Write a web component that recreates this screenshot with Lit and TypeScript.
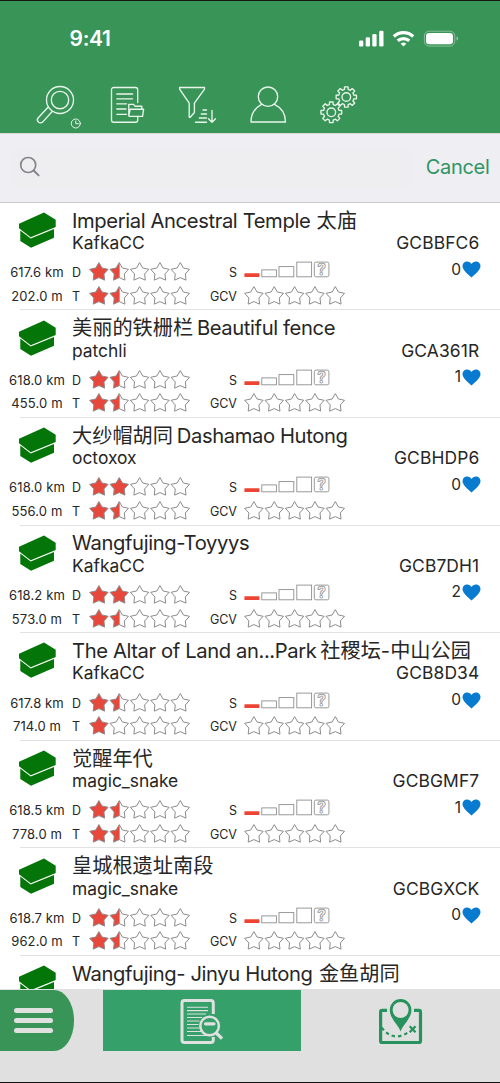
import { LitElement, html, svg, css } from "lit";
import { customElement, property } from "lit/decorators.js";

const starPoints = (cx: number, cy: number, r: number, inner: number) =>
  Array.from({ length: 10 }, (_, i) => {
    const a = (Math.PI / 5) * i - Math.PI / 2;
    const q = i % 2 ? inner : r;
    return `${(cx + q * Math.cos(a)).toFixed(2)},${(cy + q * Math.sin(a)).toFixed(2)}`;
  }).join(" ");

const gearPath = (cx: number, cy: number, r: number, root: number) => {
  const pts: string[] = [];
  for (let i = 0; i < 8; i++) {
    const a = (Math.PI / 4) * i;
    for (const [d, q] of [[-0.24, root], [-0.17, r], [0.17, r], [0.24, root]]) {
      pts.push(`${(cx + q * Math.cos(a + d)).toFixed(2)} ${(cy + q * Math.sin(a + d)).toFixed(2)}`);
    }
  }
  return "M" + pts.join("L") + "Z";
};

interface Cache {
  title: string[];
  author: string;
  code: string;
  km: string;
  m: string;
  d: number;
  t: number;
  fav: number;
}

const caches: Cache[] = [
  { title: ["Imperial Ancestral Temple ", "太庙"], author: "KafkaCC", code: "GCBBFC6", km: "617.6 km", m: "202.0 m", d: 1.5, t: 1.5, fav: 0 },
  { title: ["美丽的铁栅栏", "Beautiful fence"], author: "patchli", code: "GCA361R", km: "618.0 km", m: "455.0 m", d: 1.5, t: 1.5, fav: 1 },
  { title: ["大纱帽胡同", "Dashamao Hutong"], author: "octoxox", code: "GCBHDP6", km: "618.0 km", m: "556.0 m", d: 2, t: 1.5, fav: 0 },
  { title: ["Wangfujing-Toyyys"], author: "KafkaCC", code: "GCB7DH1", km: "618.2 km", m: "573.0 m", d: 2, t: 1.5, fav: 2 },
  { title: ["The Altar of Land an...Park", "社稷坛-中山公园"], author: "KafkaCC", code: "GCB8D34", km: "617.8 km", m: "714.0 m", d: 1.5, t: 1, fav: 0 },
  { title: ["觉醒年代"], author: "magic_snake", code: "GCBGMF7", km: "618.5 km", m: "778.0 m", d: 1.5, t: 1.5, fav: 1 },
  { title: ["皇城根遗址南段"], author: "magic_snake", code: "GCBGXCK", km: "618.7 km", m: "962.0 m", d: 1.5, t: 1.5, fav: 0 },
  { title: ["Wangfujing- Jinyu Hutong ", "金鱼胡同"], author: "", code: "", km: "", m: "", d: 0, t: 0, fav: 0 },
];

@customElement("star-rating")
class StarRating extends LitElement {
  @property({ type: Number }) value = 0;
  static styles = css`
    :host { display: block; height: 20px; }
    svg { display: block; }
  `;
  render() {
    return html`<svg width="103" height="20" viewBox="0 0 103 20">
      ${[0, 1, 2, 3, 4].map((i) => {
        const cx = 9.9 + i * 20.35;
        const pts = starPoints(cx, 10.3, 9.7, 5.3);
        const left = this.value - i;
        return svg`
          ${left >= 1 ? svg`<polygon points=${pts} fill="#e8483c"/>` : ""}
          ${left === 0.5 ? svg`<clipPath id=${"h" + i}><rect x=${cx - 10} y="0" width="10.4" height="20"/></clipPath>
            <polygon points=${pts} fill="#e8483c" clip-path=${`url(#h${i})`}/>` : ""}
          <polygon points=${pts} fill="none" stroke="#8c8c8c" stroke-width="1" stroke-linejoin="round"/>`;
      })}
    </svg>`;
  }
}

@customElement("size-meter")
class SizeMeter extends LitElement {
  static styles = css`
    :host { display: block; height: 17px; }
    svg { display: block; overflow: visible; }
    text { font: 700 15.5px Inter, sans-serif; }
  `;
  render() {
    return html`<svg width="86" height="17" viewBox="0 0 86 17">
      <rect x="0.4" y="12.2" width="15" height="3.8" rx="0.6" fill="#ee4433"/>
      <g fill="none" stroke="#8e8e8e" stroke-width="0.9">
        <rect x="17.8" y="8.9" width="14.6" height="6.9"/>
        <rect x="35" y="5.6" width="14.8" height="10.2"/>
        <rect x="52.8" y="1.1" width="14.8" height="14.7"/>
        <rect x="70.3" y="1.1" width="14.6" height="14.7" rx="1.6"/>
        <text x="77.6" y="14" text-anchor="middle" stroke-width="0.75">?</text>
      </g>
    </svg>`;
  }
}

@customElement("cache-row")
class CacheRow extends LitElement {
  @property({ attribute: false }) cache!: Cache;
  static styles = css`
    :host { display: block; height: 107.6px; flex: none; }
    .row { display: grid; grid-template-columns: 72px 1fr; }
    .boxicon { padding: 9px 0 0 18px; height: 42px; }
    .boxicon svg { display: block; }
    .head { padding-top: 4.7px; }
    .title { display: flex; font-size: 20.2px; line-height: 26px; white-space: pre; letter-spacing: -0.38px; gap: 3.8px; }
    .title.spaced { gap: 1px; }
    .cjk { letter-spacing: 0; }
    .sub { display: flex; justify-content: space-between; font-size: 17.4px; line-height: 20px; padding-right: 20.7px; margin-top: -0.6px; }
    .code { letter-spacing: 0.13px; }
    .meters {
      display: grid; grid-template-columns: 72px 16.8px 101.7px 46.5px 7px 110px 1fr;
      grid-template-rows: 23.7px 23.7px; align-items: center; margin-top: 6.3px; font-size: 13px;
    }
    .dist { text-align: center; padding-left: 2px; white-space: nowrap; letter-spacing: 0.12px; }
    .right { text-align: right; }
    .lab { font-size: 12.5px; padding-top: 1px; }
    .fav { display: flex; justify-content: flex-end; align-items: center; gap: 1px; padding: 0 19px 5px 0; font-size: 15.5px; line-height: 18px; }
    size-meter { margin-bottom: 5px; }
    .line { height: 1px; background: #e2e2e4; margin: 1.7px 0 0 20px; }
  `;
  render() {
    const c = this.cache;
    return html`
      <div class="row">
        <div class="boxicon">
          <svg width="40" height="38" viewBox="0 0 40 38">
            <path d="M1 11.8 26 .5 37.7 7.8V15L12.7 25.2 1 16.2Z" fill="#047508"/>
            <path d="M2.3 18.5 12.7 26.6 36 17V25.8L13 35.7 2.300 28.9Z" fill="#047508"/>
          </svg>
        </div>
        <div class="head">
          <div class=${c.title[0].endsWith(" ") ? "title spaced" : "title"}>${c.title.map(
            (part) => html`<span class=${/[\u4e00-\u9fff]/.test(part) ? "cjk" : ""}>${part}</span>`
          )}</div>
          <div class="sub"><span>${c.author}</span><span class="code">${c.code}</span></div>
        </div>
      </div>
      ${c.code ? html`
      <div class="meters">
        <span class="dist">${c.km}</span><span class="lab">D</span>
        <star-rating .value=${c.d}></star-rating>
        <span class="lab right">S</span><span></span><size-meter></size-meter>
        <span class="fav">${c.fav}<svg width="19" height="17" viewBox="0 0 19 17"><path d="M9.5 16.6C7 14.2.5 9.6.5 5.1.5 2.4 2.5.5 5 .5 7 .5 8.6 1.6 9.5 3 10.4 1.6 12 .5 14 .5c2.5 0 4.5 1.9 4.5 4.6 0 4.5-6.5 9.1-9 11.5Z" fill="#087bd0"/></svg></span>
        <span class="dist">${c.m}</span><span class="lab">T</span>
        <star-rating .value=${c.t}></star-rating>
        <span class="lab right">GCV</span><span></span><star-rating .value=${0}></star-rating><span></span>
      </div>
      <div class="line"></div>` : ""}
    `;
  }
}

@customElement("app-root")
class AppRoot extends LitElement {
  static styles = css`
    :host {
      display: flex; flex-direction: column; height: 1083px; width: 500px; overflow: hidden; box-sizing: border-box;
      border-top: 1px solid #10180f; border-bottom: 1px solid #111; background: #fff; color: #262626;
      font-family: Inter, "Noto Sans CJK SC", sans-serif;
    }
    svg { display: block; flex: none; }
    header { height: 132px; flex: none; background: #399457; }
    .status { display: flex; align-items: center; height: 74px; padding-left: 69.5px; box-sizing: border-box; color: #fff; }
    .time { width: 288.5px; font-size: 21px; font-weight: 600; letter-spacing: -0.3px; }
    .search {
      height: 70px; flex: none; box-sizing: border-box; display: flex; align-items: center; padding: 0 10.5px 2px 12px;
      background: #eeeef3; border-top: 1px solid #d6d8da; border-bottom: 1px solid #c9c9cd; justify-content: space-between;
    }
    .field { width: 400px; height: 43px; border-radius: 12px; background: #eeeef0; display: flex; align-items: center; padding-left: 7px; box-sizing: border-box; }
    .cancel { font-size: 20px; color: #2f9663; letter-spacing: -0.3px; }
    .list { height: 786px; flex: none; overflow: hidden; display: flex; flex-direction: column; }
    footer { flex: 1; background: #e0e0e0; padding-top: 1px; display: flex; align-items: flex-start; }
    .menu { width: 73.5px; height: 61px; background: #399457; border-radius: 0 20px 20px 0 / 0 30px 30px 0; display: flex; flex-direction: column; gap: 4.9px; justify-content: center; padding-left: 14px; box-sizing: border-box; }
    .bar { width: 39px; height: 5.4px; border-radius: 3px; background: #e0e0e0; }
    .tab { width: 198.5px; height: 61px; margin-left: 29px; background: #35a069; display: flex; align-items: center; justify-content: center; }
    .map { width: 199px; height: 61px; display: flex; align-items: center; justify-content: center; }
  `;
  render() {
    return html`
      <header>
        <div class="status">
          <span class="time">9:41</span>
          <svg width="102" height="20" viewBox="0 0 102 20">
            <g fill="#fff">
              <rect x="1" y="12.6" width="4.3" height="6" rx="1.3"/><rect x="7.7" y="9.3" width="4.3" height="9.3" rx="1.3"/>
              <rect x="14.3" y="6" width="4.3" height="12.6" rx="1.3"/><rect x="21.2" y="2.8" width="4.3" height="15.8" rx="1.3"/>
              <path d="M45.5 18.6 42.7 15.8a4 4 0 0 1 5.6 0Z"/>
              <rect x="68" y="5" width="27" height="11.2" rx="3.3"/>
              <path d="M98.600 8.600q1.400 .7 1.400 2t-1.400 2Z" opacity=".55"/>
            </g>
            <g fill="none" stroke="#fff" stroke-width="3.2">
              <path d="M35.800 8.500a14 14 0 0 1 19.400 0"/><path d="M39.700 12.800a8.600 8.600 0 0 1 11.600 0"/>
            </g>
            <rect x="66.4" y="3.2" width="30.4" height="14.9" rx="4.8" fill="none" stroke="#fff" stroke-opacity=".4"/>
          </svg>
        </div>
        <svg width="500" height="58" viewBox="0 75 500 58" fill="none" stroke="#e9f5ec" stroke-width="1.35" stroke-linejoin="round" stroke-linecap="round">
          <circle cx="60" cy="100" r="13.5"/><circle cx="60" cy="100" r="8.7"/>
          <path d="M48 107.200 38.500 117.500a2.900 2.900 0 0 0 4.100 4.600L52.200 111.500"/>
          <g stroke-width="1"><circle cx="75.8" cy="123.5" r="4.5"/><path d="M75.800 120.900V123.700H78.300"/></g>
          <path d="M137.700 102.500V89.700a2.200 2.200 0 0 0-2.200-2.200H113.700a2.200 2.200 0 0 0-2.200 2.200V120a2.200 2.200 0 0 0 2.200 2.200h21.800a2.200 2.200 0 0 0 2.200-2.200V117"/>
          <path d="M116.800 94H132.600M116.800 98.800H132.600M116.800 103.800H126.500M116.800 109H126M116.800 114.300H126.500"/>
          <path d="M128.800 115.600V104.300H133.500L135 106.200H141.800V108.800M128.800 115.600 130.200 109.200H143.600L142.600 116.300H129.200Z"/>
          <path d="M179.600 87.500H204.500V89.200L194.400 103.200V112.500L190.200 117.300H189.200V103.200L179.600 89.200Z"/>
          <path d="M203 110H206.500M201.300 114H206.500M199.300 118H206.500M195.500 122.200H206.500M212 110.500V122.200M208.500 118.800 212 122.200 215.500 118.800"/>
          <circle cx="268" cy="96.7" r="9.7"/>
          <path d="M261.600 104.400C255.500 107.500 251 113.700 251 122H285.500C285.500 113.700 281 107.500 274.400 104.400"/>
          <path d=${gearPath(346.3, 97, 10.3, 7.8)}/><circle cx="346.3" cy="97" r="4.3"/>
          <path d=${gearPath(331.3, 112.3, 10.5, 8)} fill="#399457"/><circle cx="331.3" cy="112.3" r="4.3"/>
        </svg>
      </header>
      <div class="search">
        <div class="field">
          <svg width="22" height="22" viewBox="0 0 22 22" fill="none" stroke="#85858a" stroke-width="1.7" stroke-linecap="round"><circle cx="9.2" cy="9" r="7.5"/><path d="M14.700 14.500 19.600 19.400" stroke-width="2"/></svg>
        </div>
        <span class="cancel">Cancel</span>
      </div>
      <div class="list">${caches.map((c) => html`<cache-row .cache=${c}></cache-row>`)}</div>
      <footer>
        <div class="menu"><div class="bar"></div><div class="bar"></div><div class="bar"></div></div>
        <div class="tab">
          <svg width="44" height="46" viewBox="180 997 44 46" fill="none" stroke="#e0e0e0">
            <path d="M213.300 1013V1002a2.400 2.400 0 0 0-2.400-2.400H184.400a2.400 2.400 0 0 0-2.400 2.400V1039a2.400 2.400 0 0 0 2.400 2.400H210.900a2.400 2.400 0 0 0 2.400-2.400V1036" stroke-width="3"/>
            <path d="M187 1006.200H208M187 1009.600H208M187 1013H206M187 1016.500H202M187 1020H199.500M187 1023.500H198.500M187 1027H199.500M187 1030.500H201M187 1034.500H208" stroke-width="1.1"/>
            <circle cx="209.6" cy="1025" r="9.3" fill="#35a069" stroke-width="2.5"/><path d="M205.500 1022.800H214" stroke-width="3.2" stroke-linecap="round"/><path d="M216.300 1032 222 1037.600" stroke-width="3.3"/>
          </svg>
        </div>
        <div class="map">
          <svg width="44" height="46" viewBox="379 997 44 46" fill="none" stroke="#27925b">
            <path d="M387 1009.400H382.200a1.600 1.600 0 0 0-1.600 1.600V1040a1.600 1.600 0 0 0 1.600 1.600H418.900a1.600 1.600 0 0 0 1.600-1.600V1011a1.600 1.600 0 0 0-1.600-1.600H414" stroke-width="3.2"/>
            <path d="M400.600 1030.500C398.500 1024 389.800 1017.500 389.800 1008.900a10.800 10.800 0 0 1 21.600 0C411.400 1017.500 402.700 1024 400.600 1030.500Z" fill="#27925b" stroke="none"/>
            <circle cx="400.6" cy="1009" r="8" fill="#e0e0e0" stroke="none"/>
            <path d="M381.500 1026.500C389 1036 398 1038.500 408.500 1031" stroke-width="2.2" stroke-dasharray="3.5 3"/>
            <path d="M409.700 1025.300 415.500 1031.300M415.500 1025.300 409.700 1031.300" stroke-width="2.2"/>
          </svg>
        </div>
      </footer>`;
  }
}
